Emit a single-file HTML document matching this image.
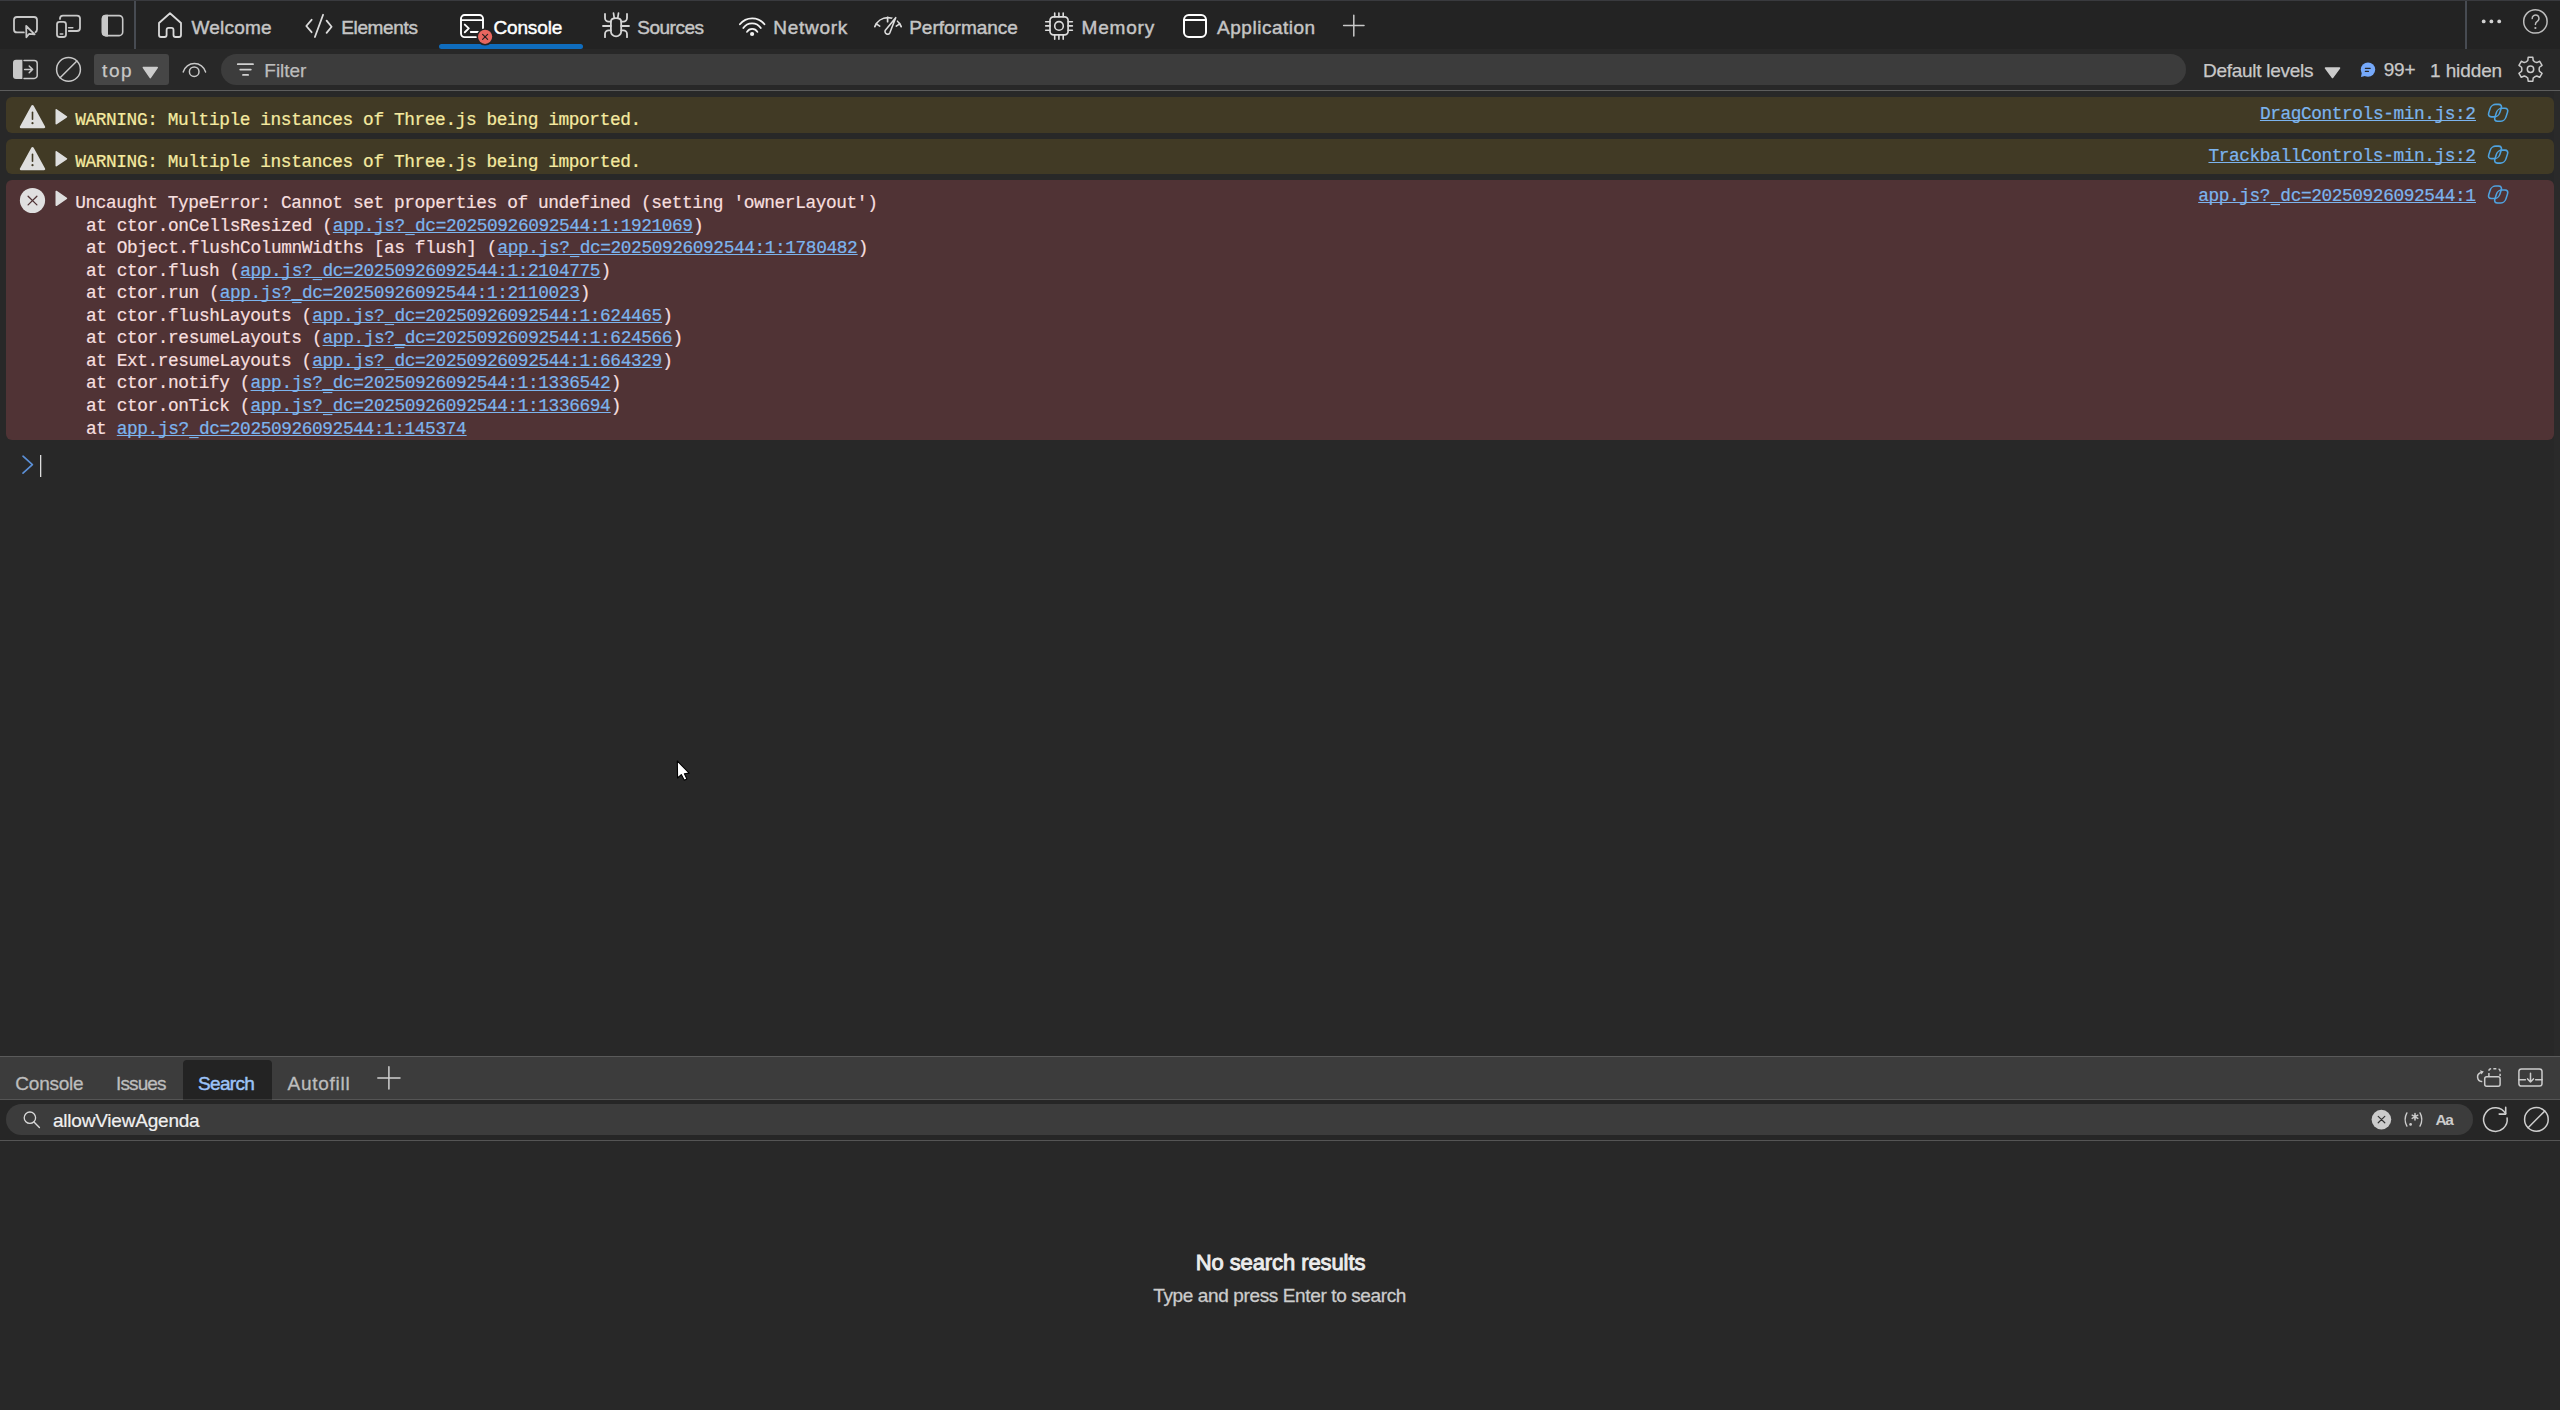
<!DOCTYPE html>
<html><head><meta charset="utf-8"><title>DevTools</title>
<style>html,body{margin:0;padding:0;background:#282828;overflow:hidden}svg{display:block}</style></head>
<body><svg width="2560" height="1410" viewBox="0 0 2560 1410">
<rect x="0" y="0" width="2560" height="1410" fill="#282828"/>
<rect x="0" y="0" width="2560" height="49" fill="#232323"/>
<rect x="0" y="0" width="2560" height="1" fill="#393a3e"/>
<rect x="134" y="1" width="2" height="48" fill="#474b52"/>
<rect x="2465" y="1" width="2" height="48" fill="#474b52"/>
<rect x="0" y="49" width="2560" height="41" fill="#282828"/>
<rect x="0" y="90" width="2560" height="1" fill="#5d5d5d"/>
<rect x="0" y="91" width="2560" height="965" fill="#282828"/>
<rect x="6" y="97" width="2548" height="36" rx="6" fill="#413a25"/>
<rect x="6" y="139" width="2548" height="35" rx="6" fill="#413a25"/>
<rect x="6" y="180" width="2548" height="260" rx="6" fill="#503335"/>
<rect x="2554" y="91" width="6" height="965" fill="#2a2a2a"/>
<rect x="0" y="1056" width="2560" height="1" fill="#5a5a5a"/>
<rect x="0" y="1057" width="2560" height="42" fill="#3c3c3c"/>
<rect x="0" y="1099" width="2560" height="1" fill="#555555"/>
<path d="M183 1099.5 V1064 a4 4 0 0 1 4 -4 H268 a4 4 0 0 1 4 4 V1099.5 Z" fill="#232323"/>
<rect x="0" y="1100" width="2560" height="40" fill="#262626"/>
<rect x="6" y="1104" width="2467" height="31" rx="15.5" fill="#3c3c3c"/>
<rect x="0" y="1140" width="2560" height="1" fill="#555555"/>
<rect x="0" y="1141" width="2560" height="269" fill="#282828"/>
<rect x="94" y="54" width="75" height="31" rx="3" fill="#464646"/>
<rect x="221" y="54" width="1965" height="31" rx="15.5" fill="#3c3c3c"/>
<rect x="439" y="44" width="144" height="5" rx="2.5" fill="#0f6cbd"/>
<text x="191.40" y="34.00" font-family="Liberation Sans" font-size="19" font-weight="normal" fill="#c5c5c5" textLength="80.30" lengthAdjust="spacing" style="white-space:pre"  stroke="#c5c5c5" stroke-width="0.45">Welcome</text>
<text x="341.20" y="34.00" font-family="Liberation Sans" font-size="19" font-weight="normal" fill="#c5c5c5" textLength="76.70" lengthAdjust="spacing" style="white-space:pre"  stroke="#c5c5c5" stroke-width="0.45">Elements</text>
<text x="493.40" y="34.00" font-family="Liberation Sans" font-size="19" font-weight="normal" fill="#ffffff" textLength="68.90" lengthAdjust="spacing" style="white-space:pre"  stroke="#ffffff" stroke-width="0.45">Console</text>
<text x="637.20" y="34.00" font-family="Liberation Sans" font-size="19" font-weight="normal" fill="#c5c5c5" textLength="66.90" lengthAdjust="spacing" style="white-space:pre"  stroke="#c5c5c5" stroke-width="0.45">Sources</text>
<text x="773.20" y="34.00" font-family="Liberation Sans" font-size="19" font-weight="normal" fill="#c5c5c5" textLength="74.10" lengthAdjust="spacing" style="white-space:pre"  stroke="#c5c5c5" stroke-width="0.45">Network</text>
<text x="909.20" y="34.00" font-family="Liberation Sans" font-size="19" font-weight="normal" fill="#c5c5c5" textLength="108.70" lengthAdjust="spacing" style="white-space:pre"  stroke="#c5c5c5" stroke-width="0.45">Performance</text>
<text x="1081.50" y="34.00" font-family="Liberation Sans" font-size="19" font-weight="normal" fill="#c5c5c5" textLength="72.70" lengthAdjust="spacing" style="white-space:pre"  stroke="#c5c5c5" stroke-width="0.45">Memory</text>
<text x="1217.00" y="34.00" font-family="Liberation Sans" font-size="19" font-weight="normal" fill="#c5c5c5" textLength="98.20" lengthAdjust="spacing" style="white-space:pre"  stroke="#c5c5c5" stroke-width="0.45">Application</text>
<text x="102.10" y="76.90" font-family="Liberation Sans" font-size="19" font-weight="normal" fill="#c8c8c8" textLength="29.50" lengthAdjust="spacing" style="white-space:pre"  stroke="#c8c8c8" stroke-width="0.25">top</text>
<text x="264.30" y="76.90" font-family="Liberation Sans" font-size="19" font-weight="normal" fill="#bdbdbd" textLength="42.10" lengthAdjust="spacing" style="white-space:pre"  stroke="#bdbdbd" stroke-width="0.25">Filter</text>
<text x="2203.10" y="76.90" font-family="Liberation Sans" font-size="19" font-weight="normal" fill="#c8c8c8" textLength="110.30" lengthAdjust="spacing" style="white-space:pre"  stroke="#c8c8c8" stroke-width="0.25">Default levels</text>
<text x="2383.70" y="75.90" font-family="Liberation Sans" font-size="19" font-weight="normal" fill="#c8c8c8" textLength="31.90" lengthAdjust="spacing" style="white-space:pre"  stroke="#c8c8c8" stroke-width="0.25">99+</text>
<text x="2430.00" y="76.90" font-family="Liberation Sans" font-size="19" font-weight="normal" fill="#c8c8c8" textLength="72.20" lengthAdjust="spacing" style="white-space:pre"  stroke="#c8c8c8" stroke-width="0.25">1 hidden</text>
<text x="75.20" y="125.00" font-family="Liberation Mono" font-size="17.8" font-weight="normal" fill="#f5eaa0" textLength="565.95" lengthAdjust="spacing" style="white-space:pre"  stroke="#f5eaa0" stroke-width="0.22">WARNING: Multiple instances of Three.js being imported.</text>
<text x="75.20" y="167.00" font-family="Liberation Mono" font-size="17.8" font-weight="normal" fill="#f5eaa0" textLength="565.95" lengthAdjust="spacing" style="white-space:pre"  stroke="#f5eaa0" stroke-width="0.22">WARNING: Multiple instances of Three.js being imported.</text>
<text x="75.20" y="208.00" font-family="Liberation Mono" font-size="17.8" font-weight="normal" fill="#f6dfdf" textLength="802.62" lengthAdjust="spacing" style="white-space:pre"  stroke="#f6dfdf" stroke-width="0.22">Uncaught TypeError: Cannot set properties of undefined (setting &#x27;ownerLayout&#x27;)</text>
<text x="85.90" y="230.60" font-family="Liberation Mono" font-size="17.8" font-weight="normal" fill="#f6dfdf" textLength="246.96" lengthAdjust="spacing" style="white-space:pre"  stroke="#f6dfdf" stroke-width="0.22">at ctor.onCellsResized (</text>
<text x="332.86" y="230.60" font-family="Liberation Mono" font-size="17.8" font-weight="normal" fill="#7cb4ee" textLength="360.15" lengthAdjust="spacing" style="white-space:pre"  stroke="#7cb4ee" stroke-width="0.22">app.js?_dc=20250926092544:1:1921069</text>
<rect x="332.86" y="232" width="360.15" height="1" fill="#7cb4ee"/>
<rect x="405.29" y="234" width="9.4" height="1.1" fill="#7cb4ee"/>
<text x="693.01" y="230.60" font-family="Liberation Mono" font-size="17.8" font-weight="normal" fill="#f6dfdf" textLength="10.29" lengthAdjust="spacing" style="white-space:pre"  stroke="#f6dfdf" stroke-width="0.22">)</text>
<text x="85.90" y="253.15" font-family="Liberation Mono" font-size="17.8" font-weight="normal" fill="#f6dfdf" textLength="411.60" lengthAdjust="spacing" style="white-space:pre"  stroke="#f6dfdf" stroke-width="0.22">at Object.flushColumnWidths [as flush] (</text>
<text x="497.50" y="253.15" font-family="Liberation Mono" font-size="17.8" font-weight="normal" fill="#7cb4ee" textLength="360.15" lengthAdjust="spacing" style="white-space:pre"  stroke="#7cb4ee" stroke-width="0.22">app.js?_dc=20250926092544:1:1780482</text>
<rect x="497.50" y="254" width="360.15" height="1" fill="#7cb4ee"/>
<rect x="569.93" y="256" width="9.4" height="1.1" fill="#7cb4ee"/>
<text x="857.65" y="253.15" font-family="Liberation Mono" font-size="17.8" font-weight="normal" fill="#f6dfdf" textLength="10.29" lengthAdjust="spacing" style="white-space:pre"  stroke="#f6dfdf" stroke-width="0.22">)</text>
<text x="85.90" y="275.70" font-family="Liberation Mono" font-size="17.8" font-weight="normal" fill="#f6dfdf" textLength="154.35" lengthAdjust="spacing" style="white-space:pre"  stroke="#f6dfdf" stroke-width="0.22">at ctor.flush (</text>
<text x="240.25" y="275.70" font-family="Liberation Mono" font-size="17.8" font-weight="normal" fill="#7cb4ee" textLength="360.15" lengthAdjust="spacing" style="white-space:pre"  stroke="#7cb4ee" stroke-width="0.22">app.js?_dc=20250926092544:1:2104775</text>
<rect x="240.25" y="277" width="360.15" height="1" fill="#7cb4ee"/>
<rect x="312.68" y="279" width="9.4" height="1.1" fill="#7cb4ee"/>
<text x="600.40" y="275.70" font-family="Liberation Mono" font-size="17.8" font-weight="normal" fill="#f6dfdf" textLength="10.29" lengthAdjust="spacing" style="white-space:pre"  stroke="#f6dfdf" stroke-width="0.22">)</text>
<text x="85.90" y="298.25" font-family="Liberation Mono" font-size="17.8" font-weight="normal" fill="#f6dfdf" textLength="133.77" lengthAdjust="spacing" style="white-space:pre"  stroke="#f6dfdf" stroke-width="0.22">at ctor.run (</text>
<text x="219.67" y="298.25" font-family="Liberation Mono" font-size="17.8" font-weight="normal" fill="#7cb4ee" textLength="360.15" lengthAdjust="spacing" style="white-space:pre"  stroke="#7cb4ee" stroke-width="0.22">app.js?_dc=20250926092544:1:2110023</text>
<rect x="219.67" y="300" width="360.15" height="1" fill="#7cb4ee"/>
<rect x="292.10" y="302" width="9.4" height="1.1" fill="#7cb4ee"/>
<text x="579.82" y="298.25" font-family="Liberation Mono" font-size="17.8" font-weight="normal" fill="#f6dfdf" textLength="10.29" lengthAdjust="spacing" style="white-space:pre"  stroke="#f6dfdf" stroke-width="0.22">)</text>
<text x="85.90" y="320.80" font-family="Liberation Mono" font-size="17.8" font-weight="normal" fill="#f6dfdf" textLength="226.38" lengthAdjust="spacing" style="white-space:pre"  stroke="#f6dfdf" stroke-width="0.22">at ctor.flushLayouts (</text>
<text x="312.28" y="320.80" font-family="Liberation Mono" font-size="17.8" font-weight="normal" fill="#7cb4ee" textLength="349.86" lengthAdjust="spacing" style="white-space:pre"  stroke="#7cb4ee" stroke-width="0.22">app.js?_dc=20250926092544:1:624465</text>
<rect x="312.28" y="322" width="349.86" height="1" fill="#7cb4ee"/>
<rect x="384.71" y="324" width="9.4" height="1.1" fill="#7cb4ee"/>
<text x="662.14" y="320.80" font-family="Liberation Mono" font-size="17.8" font-weight="normal" fill="#f6dfdf" textLength="10.29" lengthAdjust="spacing" style="white-space:pre"  stroke="#f6dfdf" stroke-width="0.22">)</text>
<text x="85.90" y="343.35" font-family="Liberation Mono" font-size="17.8" font-weight="normal" fill="#f6dfdf" textLength="236.67" lengthAdjust="spacing" style="white-space:pre"  stroke="#f6dfdf" stroke-width="0.22">at ctor.resumeLayouts (</text>
<text x="322.57" y="343.35" font-family="Liberation Mono" font-size="17.8" font-weight="normal" fill="#7cb4ee" textLength="349.86" lengthAdjust="spacing" style="white-space:pre"  stroke="#7cb4ee" stroke-width="0.22">app.js?_dc=20250926092544:1:624566</text>
<rect x="322.57" y="345" width="349.86" height="1" fill="#7cb4ee"/>
<rect x="395.00" y="347" width="9.4" height="1.1" fill="#7cb4ee"/>
<text x="672.43" y="343.35" font-family="Liberation Mono" font-size="17.8" font-weight="normal" fill="#f6dfdf" textLength="10.29" lengthAdjust="spacing" style="white-space:pre"  stroke="#f6dfdf" stroke-width="0.22">)</text>
<text x="85.90" y="365.90" font-family="Liberation Mono" font-size="17.8" font-weight="normal" fill="#f6dfdf" textLength="226.38" lengthAdjust="spacing" style="white-space:pre"  stroke="#f6dfdf" stroke-width="0.22">at Ext.resumeLayouts (</text>
<text x="312.28" y="365.90" font-family="Liberation Mono" font-size="17.8" font-weight="normal" fill="#7cb4ee" textLength="349.86" lengthAdjust="spacing" style="white-space:pre"  stroke="#7cb4ee" stroke-width="0.22">app.js?_dc=20250926092544:1:664329</text>
<rect x="312.28" y="367" width="349.86" height="1" fill="#7cb4ee"/>
<rect x="384.71" y="369" width="9.4" height="1.1" fill="#7cb4ee"/>
<text x="662.14" y="365.90" font-family="Liberation Mono" font-size="17.8" font-weight="normal" fill="#f6dfdf" textLength="10.29" lengthAdjust="spacing" style="white-space:pre"  stroke="#f6dfdf" stroke-width="0.22">)</text>
<text x="85.90" y="388.45" font-family="Liberation Mono" font-size="17.8" font-weight="normal" fill="#f6dfdf" textLength="164.64" lengthAdjust="spacing" style="white-space:pre"  stroke="#f6dfdf" stroke-width="0.22">at ctor.notify (</text>
<text x="250.54" y="388.45" font-family="Liberation Mono" font-size="17.8" font-weight="normal" fill="#7cb4ee" textLength="360.15" lengthAdjust="spacing" style="white-space:pre"  stroke="#7cb4ee" stroke-width="0.22">app.js?_dc=20250926092544:1:1336542</text>
<rect x="250.54" y="390" width="360.15" height="1" fill="#7cb4ee"/>
<rect x="322.97" y="392" width="9.4" height="1.1" fill="#7cb4ee"/>
<text x="610.69" y="388.45" font-family="Liberation Mono" font-size="17.8" font-weight="normal" fill="#f6dfdf" textLength="10.29" lengthAdjust="spacing" style="white-space:pre"  stroke="#f6dfdf" stroke-width="0.22">)</text>
<text x="85.90" y="411.00" font-family="Liberation Mono" font-size="17.8" font-weight="normal" fill="#f6dfdf" textLength="164.64" lengthAdjust="spacing" style="white-space:pre"  stroke="#f6dfdf" stroke-width="0.22">at ctor.onTick (</text>
<text x="250.54" y="411.00" font-family="Liberation Mono" font-size="17.8" font-weight="normal" fill="#7cb4ee" textLength="360.15" lengthAdjust="spacing" style="white-space:pre"  stroke="#7cb4ee" stroke-width="0.22">app.js?_dc=20250926092544:1:1336694</text>
<rect x="250.54" y="412" width="360.15" height="1" fill="#7cb4ee"/>
<rect x="322.97" y="414" width="9.4" height="1.1" fill="#7cb4ee"/>
<text x="610.69" y="411.00" font-family="Liberation Mono" font-size="17.8" font-weight="normal" fill="#f6dfdf" textLength="10.29" lengthAdjust="spacing" style="white-space:pre"  stroke="#f6dfdf" stroke-width="0.22">)</text>
<text x="85.90" y="433.55" font-family="Liberation Mono" font-size="17.8" font-weight="normal" fill="#f6dfdf" textLength="30.87" lengthAdjust="spacing" style="white-space:pre"  stroke="#f6dfdf" stroke-width="0.22">at </text>
<text x="116.77" y="433.55" font-family="Liberation Mono" font-size="17.8" font-weight="normal" fill="#7cb4ee" textLength="349.86" lengthAdjust="spacing" style="white-space:pre"  stroke="#7cb4ee" stroke-width="0.22">app.js?_dc=20250926092544:1:145374</text>
<rect x="116.77" y="435" width="349.86" height="1" fill="#7cb4ee"/>
<rect x="189.20" y="437" width="9.4" height="1.1" fill="#7cb4ee"/>
<text x="2259.91" y="118.80" font-family="Liberation Mono" font-size="17.8" font-weight="normal" fill="#7cb4ee" textLength="216.09" lengthAdjust="spacing" style="white-space:pre"  stroke="#7cb4ee" stroke-width="0.22">DragControls-min.js:2</text>
<rect x="2259.91" y="120" width="216.09" height="1" fill="#7cb4ee"/>
<text x="2208.46" y="160.50" font-family="Liberation Mono" font-size="17.8" font-weight="normal" fill="#7cb4ee" textLength="267.54" lengthAdjust="spacing" style="white-space:pre"  stroke="#7cb4ee" stroke-width="0.22">TrackballControls-min.js:2</text>
<rect x="2208.46" y="162" width="267.54" height="1" fill="#7cb4ee"/>
<text x="2198.17" y="200.50" font-family="Liberation Mono" font-size="17.8" font-weight="normal" fill="#7cb4ee" textLength="277.83" lengthAdjust="spacing" style="white-space:pre"  stroke="#7cb4ee" stroke-width="0.22">app.js?_dc=20250926092544:1</text>
<rect x="2198.17" y="202" width="277.83" height="1" fill="#7cb4ee"/>
<rect x="2270.60" y="204" width="9.4" height="1.1" fill="#7cb4ee"/>
<text x="15.30" y="1089.90" font-family="Liberation Sans" font-size="19" font-weight="normal" fill="#bdbdbd" textLength="68.40" lengthAdjust="spacing" style="white-space:pre"  stroke="#bdbdbd" stroke-width="0.3">Console</text>
<text x="116.10" y="1089.90" font-family="Liberation Sans" font-size="19" font-weight="normal" fill="#bdbdbd" textLength="50.40" lengthAdjust="spacing" style="white-space:pre"  stroke="#bdbdbd" stroke-width="0.3">Issues</text>
<text x="198.10" y="1089.80" font-family="Liberation Sans" font-size="19" font-weight="normal" fill="#9cc3f8" textLength="56.70" lengthAdjust="spacing" style="white-space:pre"  stroke="#9cc3f8" stroke-width="0.45">Search</text>
<text x="287.50" y="1089.80" font-family="Liberation Sans" font-size="19" font-weight="normal" fill="#bdbdbd" textLength="62.30" lengthAdjust="spacing" style="white-space:pre"  stroke="#bdbdbd" stroke-width="0.3">Autofill</text>
<text x="52.90" y="1126.70" font-family="Liberation Sans" font-size="19" font-weight="normal" fill="#f0f0f0" textLength="146.80" lengthAdjust="spacing" style="white-space:pre"  stroke="#f0f0f0" stroke-width="0.2">allowViewAgenda</text>
<text x="1195.70" y="1269.90" font-family="Liberation Sans" font-size="22" font-weight="normal" fill="#ececec" textLength="169.70" lengthAdjust="spacing" style="white-space:pre"  stroke="#ececec" stroke-width="0.9">No search results</text>
<text x="1153.20" y="1301.70" font-family="Liberation Sans" font-size="19" font-weight="normal" fill="#cccccc" textLength="253.20" lengthAdjust="spacing" style="white-space:pre"  stroke="#cccccc" stroke-width="0.3">Type and press Enter to search</text>
<path d="M23.9 32.4 H17 a3 3 0 0 1 -3 -3 V20 a3 3 0 0 1 3 -3 H34 a3 3 0 0 1 3 3 V29.6 a3 3 0 0 1 -1.6 2.6" fill="none" stroke="#c8c8c8" stroke-width="1.8" stroke-linecap="round" stroke-linejoin="round" />
<path d="M26.2 26 L26.4 37.3 L29.2 33.8 L34.6 34.4 Z" fill="none" stroke="#c8c8c8" stroke-width="1.8" stroke-linecap="round" stroke-linejoin="round" />
<path d="M60 18.9 V18.6 a3 3 0 0 1 3 -3 H77 a3 3 0 0 1 3 3 V28 a3 3 0 0 1 -3 3 H68.8" fill="none" stroke="#c8c8c8" stroke-width="1.8" stroke-linecap="round" stroke-linejoin="round" />
<path d="M68.6 27.7 H72.8" fill="none" stroke="#c8c8c8" stroke-width="1.6" stroke-linecap="round" stroke-linejoin="round" />
<rect x="57" y="21.8" width="9" height="15.2" rx="2.5" fill="none" stroke="#c8c8c8" stroke-width="1.8"/>
<path d="M60.3 34 H62.7" fill="none" stroke="#c8c8c8" stroke-width="1.6" stroke-linecap="round" stroke-linejoin="round" />
<rect x="102.5" y="15.6" width="20.2" height="20" rx="3.6" fill="none" stroke="#c8c8c8" stroke-width="1.6"/>
<path d="M108 14.8 V36.4 H105.5 a3.8 3.8 0 0 1 -3.8 -3.8 V18.6 a3.8 3.8 0 0 1 3.8 -3.8 Z" fill="#c8c8c8" />
<path d="M159 23 L170 13.3 L181 23 V35 a2 2 0 0 1 -2 2 H175.5 a2 2 0 0 1 -2 -2 V29.9 a2 2 0 0 0 -2 -2 H168.6 a2 2 0 0 0 -2 2 V35 a2 2 0 0 1 -2 2 H161 a2 2 0 0 1 -2 -2 Z" fill="none" stroke="#dadada" stroke-width="1.8" stroke-linecap="round" stroke-linejoin="round" />
<path d="M311.6 19.8 L306.3 26 L311.6 32.2 M323.1 14.8 L314.9 37 M326.6 20.6 L331.6 26.7 L326.6 32.9" fill="none" stroke="#dcdcdc" stroke-width="1.8" stroke-linecap="round" stroke-linejoin="round" />
<rect x="461" y="15" width="22" height="22.1" rx="3.6" fill="none" stroke="#ffffff" stroke-width="1.9"/>
<path d="M461 20.1 H483" fill="none" stroke="#ffffff" stroke-width="1.9" stroke-linecap="round" stroke-linejoin="round" />
<path d="M464.8 24.6 L468.8 28.4 L464.8 32.3" fill="none" stroke="#ffffff" stroke-width="1.9" stroke-linecap="round" stroke-linejoin="round" />
<path d="M470.8 32 H479.6" fill="none" stroke="#ffffff" stroke-width="1.9" stroke-linecap="round" stroke-linejoin="round" />
<circle cx="485.1" cy="36.8" r="8.6" fill="#232323"/>
<circle cx="485.1" cy="36.8" r="7.1" fill="#e8665f"/>
<path d="M482.6 34.3 L487.6 39.3 M487.6 34.3 L482.6 39.3" fill="none" stroke="#2a2020" stroke-width="1.2" stroke-linecap="round" stroke-linejoin="round" />
<path d="M610.9 21.6 Q610.9 18.1 616 18.1 Q621.2 18.1 621.2 21.6 V31.2 A5.15 5.15 0 0 1 610.9 31.2 Z" fill="none" stroke="#d6d6d6" stroke-width="1.8" stroke-linecap="round" stroke-linejoin="round" />
<path d="M613.5 13.2 L614.2 17.6 M618.5 13.2 L617.8 17.6" fill="none" stroke="#d6d6d6" stroke-width="1.7" stroke-linecap="round" stroke-linejoin="round" />
<path d="M605 14 V18 a3.7 3.7 0 0 0 3.7 3.7 H610.9 M627 14 V18 a3.7 3.7 0 0 1 -3.7 3.7 H621.2" fill="none" stroke="#d6d6d6" stroke-width="1.8" stroke-linecap="round" stroke-linejoin="round" />
<path d="M603 26 H610.9 M621.2 26 H629" fill="none" stroke="#d6d6d6" stroke-width="1.8" stroke-linecap="round" stroke-linejoin="round" />
<path d="M605 37.2 V34 a3.7 3.7 0 0 1 3.7 -3.7 H610.9 M627 37.2 V34 a3.7 3.7 0 0 0 -3.7 -3.7 H621.2" fill="none" stroke="#d6d6d6" stroke-width="1.8" stroke-linecap="round" stroke-linejoin="round" />
<path d="M739.9 24.3 A15.6 15.6 0 0 1 764.5 24.3" fill="none" stroke="#f2f2f2" stroke-width="1.8" stroke-linecap="round" stroke-linejoin="round" />
<path d="M743.3 28.1 A10.4 10.4 0 0 1 760.8 28.1" fill="none" stroke="#f2f2f2" stroke-width="1.8" stroke-linecap="round" stroke-linejoin="round" />
<path d="M747 31.9 A6.0 6.0 0 0 1 757.4 31.9" fill="none" stroke="#f2f2f2" stroke-width="1.8" stroke-linecap="round" stroke-linejoin="round" />
<circle cx="752.1" cy="34" r="2.1" fill="#f2f2f2"/>
<path d="M874.8 26.6 A14.2 14.2 0 0 1 901.2 26.6" fill="none" stroke="#dcdcdc" stroke-width="1.7" stroke-linecap="round" stroke-linejoin="round" />
<path d="M895.7 17.7 L889.84 32.82 A2.6 2.6 0 0 1 885.36 30.18 Z" fill="none" stroke="#232323" stroke-width="4.5" stroke-linecap="round" stroke-linejoin="round" />
<path d="M895.7 17.7 L889.84 32.82 A2.6 2.6 0 0 1 885.36 30.18 Z" fill="none" stroke="#dcdcdc" stroke-width="1.6" stroke-linecap="round" stroke-linejoin="round" />
<path d="M876.4 23.9 L879.7 26.1 M887.6 17.3 V21.7 M899.6 23.9 L896.3 26.1" fill="none" stroke="#dcdcdc" stroke-width="1.7" stroke-linecap="round" stroke-linejoin="round" />
<rect x="1050" y="16.8" width="18.1" height="18.1" rx="3.6" fill="none" stroke="#dcdcdc" stroke-width="1.7"/>
<path d="M1054.7 13 V16.8 M1054.7 34.9 V39.2 M1058.9 13 V16.8 M1058.9 34.9 V39.2 M1063.2 13 V16.8 M1063.2 34.9 V39.2 M1045.7 21.7 H1050 M1068.1 21.7 H1072.4 M1045.7 25.9 H1050 M1068.1 25.9 H1072.4 M1045.7 30.2 H1050 M1068.1 30.2 H1072.4 " fill="none" stroke="#dcdcdc" stroke-width="1.6" stroke-linecap="round" stroke-linejoin="round" />
<circle cx="1059" cy="25.9" r="4.3" fill="none" stroke="#dcdcdc" stroke-width="1.6"/>
<rect x="1184" y="15" width="22" height="22" rx="4.8" fill="none" stroke="#ffffff" stroke-width="2"/>
<path d="M1184 20 H1206" fill="none" stroke="#ffffff" stroke-width="2" stroke-linecap="round" stroke-linejoin="round" />
<path d="M1343.6 25.6 H1364 M1353.8 15.2 V36" fill="none" stroke="#c8c8c8" stroke-width="1.5" stroke-linecap="round" stroke-linejoin="round" />
<circle cx="2483.7" cy="21.4" r="1.9" fill="#d2d2d2"/>
<circle cx="2491.4" cy="21.4" r="1.9" fill="#d2d2d2"/>
<circle cx="2499.2" cy="21.4" r="1.9" fill="#d2d2d2"/>
<circle cx="2535.4" cy="21.4" r="11.7" fill="none" stroke="#bdbdbd" stroke-width="1.5"/>
<path d="M2532.2 18.6 A3.4 3.4 0 1 1 2537.6 21.1 Q2535.4 22.4 2535.4 24.4" fill="none" stroke="#bdbdbd" stroke-width="1.5" stroke-linecap="round" stroke-linejoin="round" />
<circle cx="2535.4" cy="28.0" r="1.1" fill="#bdbdbd"/>
<path d="M24 60.5 H34.2 a3 3 0 0 1 3 3 V75.4 a3 3 0 0 1 -3 3 H24" fill="none" stroke="#c8c8c8" stroke-width="1.5" stroke-linecap="round" stroke-linejoin="round" />
<path d="M22.4 59.8 V79.1 H16 a3 3 0 0 1 -3 -3 V62.8 a3 3 0 0 1 3 -3 Z" fill="#c8c8c8" />
<path d="M24.6 69.4 H32.6 M29.2 66 L32.6 69.4 L29.2 72.8" fill="none" stroke="#c8c8c8" stroke-width="1.5" stroke-linecap="round" stroke-linejoin="round" />
<circle cx="68.5" cy="69.4" r="11.9" fill="none" stroke="#c8c8c8" stroke-width="1.5"/>
<path d="M76.9 61 L60.1 77.8" fill="none" stroke="#c8c8c8" stroke-width="1.5" stroke-linecap="round" stroke-linejoin="round" />
<path d="M143.4 67.5 H157.2 L150.3 77.6 Z" fill="#cccccc" stroke="#cccccc" stroke-width="1.6" stroke-linecap="round" stroke-linejoin="round" />
<path d="M183.2 72 A11.65 11.65 0 0 1 205.6 72" fill="none" stroke="#c8c8c8" stroke-width="1.4" stroke-linecap="round" stroke-linejoin="round" />
<circle cx="194.2" cy="71.7" r="4.8" fill="none" stroke="#c8c8c8" stroke-width="1.5"/>
<path d="M237.8 64.2 H253 M240.2 69.6 H250.8 M243 74.9 H248.1" fill="none" stroke="#d0d0d0" stroke-width="1.8" stroke-linecap="round" stroke-linejoin="round" />
<path d="M2325.5 68.1 H2339.5 L2332.5 77.5 Z" fill="#cccccc" stroke="#cccccc" stroke-width="1.6" stroke-linecap="round" stroke-linejoin="round" />
<circle cx="2368" cy="69.6" r="7.2" fill="#76a9fa"/>
<path d="M2361 77 L2362.2 70.5 L2367 75.5 Z" fill="#76a9fa" />
<path d="M2365.4 68.3 H2370.2 M2365.4 71.4 H2368.4" fill="none" stroke="#282828" stroke-width="1.3" stroke-linecap="round" stroke-linejoin="round" />
<path d="M2526.20 61.85 L2527.81 60.50 L2528.17 57.32 L2532.83 57.32 L2533.19 60.50 L2534.80 61.85 L2536.77 62.57 L2539.71 61.30 L2542.04 65.33 L2539.46 67.23 L2539.10 69.30 L2539.46 71.37 L2542.04 73.27 L2539.71 77.30 L2536.77 76.03 L2534.80 76.75 L2533.19 78.10 L2532.83 81.28 L2528.17 81.28 L2527.81 78.10 L2526.20 76.75 L2524.23 76.03 L2521.29 77.30 L2518.96 73.27 L2521.54 71.37 L2521.90 69.30 L2521.54 67.23 L2518.96 65.33 L2521.29 61.30 L2524.23 62.57 Z" fill="none" stroke="#cacaca" stroke-width="1.5" stroke-linecap="round" stroke-linejoin="round" />
<circle cx="2530.5" cy="69.3" r="3.2" fill="none" stroke="#cacaca" stroke-width="1.5"/>
<path d="M32.5 106.2 L44 127 H21 Z" fill="#dedede" stroke="#dedede" stroke-width="2.4" stroke-linecap="round" stroke-linejoin="round" />
<rect x="31.7" y="111.6" width="1.6" height="8.4" rx="0.8" fill="#413a25"/>
<circle cx="32.5" cy="123.2" r="1.1" fill="#413a25"/>
<path d="M56.3 109.8 V123.7 L66.4 116.8 Z" fill="#dedede" stroke="#dedede" stroke-width="1.6" stroke-linecap="round" stroke-linejoin="round" />
<path d="M32.5 148.2 L44 169 H21 Z" fill="#dedede" stroke="#dedede" stroke-width="2.4" stroke-linecap="round" stroke-linejoin="round" />
<rect x="31.7" y="153.6" width="1.6" height="8.4" rx="0.8" fill="#413a25"/>
<circle cx="32.5" cy="165.2" r="1.1" fill="#413a25"/>
<path d="M56.3 151.8 V165.7 L66.4 158.8 Z" fill="#dedede" stroke="#dedede" stroke-width="1.6" stroke-linecap="round" stroke-linejoin="round" />
<path d="M56.3 191.5 V205.3 L66.4 198.4 Z" fill="#dedede" stroke="#dedede" stroke-width="1.6" stroke-linecap="round" stroke-linejoin="round" />
<circle cx="32.5" cy="200.5" r="12.6" fill="#e0e0e0"/>
<path d="M28.1 196.2 L36.9 204.9 M36.9 196.2 L28.1 204.9" fill="none" stroke="#503335" stroke-width="1.3" stroke-linecap="round" stroke-linejoin="round" />
<g fill="none" stroke="#4fa3e0" stroke-width="1.6"><rect x="-5.5" y="-6.25" width="11" height="12.5" rx="4" transform="translate(2495 110.60000000000001) skewX(-18)"/><rect x="-5.5" y="-6.5" width="11" height="13" rx="4" transform="translate(2501.2 114.80000000000001) skewX(-18)"/></g>
<g fill="none" stroke="#4fa3e0" stroke-width="1.6"><rect x="-5.5" y="-6.25" width="11" height="12.5" rx="4" transform="translate(2495 152.39999999999998) skewX(-18)"/><rect x="-5.5" y="-6.5" width="11" height="13" rx="4" transform="translate(2501.2 156.6) skewX(-18)"/></g>
<g fill="none" stroke="#4fa3e0" stroke-width="1.6"><rect x="-5.5" y="-6.25" width="11" height="12.5" rx="4" transform="translate(2495 192.29999999999998) skewX(-18)"/><rect x="-5.5" y="-6.5" width="11" height="13" rx="4" transform="translate(2501.2 196.5) skewX(-18)"/></g>
<path d="M23 456.2 L32.4 464.7 L23 473.2" fill="none" stroke="#5b8fd6" stroke-width="1.7" stroke-linecap="round" stroke-linejoin="round" />
<rect x="40" y="455" width="1.3" height="22" fill="#dddddd"/>
<path d="M377.8 1077.9 H400 M388.9 1066.8 V1089" fill="none" stroke="#cfcfcf" stroke-width="1.5" stroke-linecap="round" stroke-linejoin="round" />
<rect x="2484.7" y="1076.8" width="15.4" height="9.4" rx="2" fill="none" stroke="#cccccc" stroke-width="1.5"/>
<path d="M2488.9 1076 V1071 a2.3 2.3 0 0 1 2.3 -2.3 H2497.8 a2.3 2.3 0 0 1 2.3 2.3 V1076" fill="none" stroke="#cccccc" stroke-width="1.5" stroke-dasharray="3 2.2"/>
<path d="M2481.6 1081.6 A4.6 4.6 0 0 1 2480.4 1072.8" fill="none" stroke="#cccccc" stroke-width="1.5" stroke-linecap="round" stroke-linejoin="round" />
<path d="M2480 1070.2 L2483.8 1071.6 L2481.4 1074.6 Z" fill="#cccccc" />
<rect x="2518.9" y="1068.9" width="23.1" height="17.1" rx="2.6" fill="none" stroke="#cccccc" stroke-width="1.5"/>
<path d="M2518.9 1079.8 H2525.4 M2535.6 1079.8 H2542" fill="none" stroke="#cccccc" stroke-width="1.5" stroke-linecap="round" stroke-linejoin="round" />
<path d="M2530.5 1073.2 V1082 M2527.6 1078.9 L2530.5 1082 L2533.4 1078.9" fill="none" stroke="#cccccc" stroke-width="1.5" stroke-linecap="round" stroke-linejoin="round" />
<circle cx="29.9" cy="1117.7" r="5.7" fill="none" stroke="#d8d8d8" stroke-width="1.3"/>
<path d="M34 1121.9 L39.4 1127.4" fill="none" stroke="#d8d8d8" stroke-width="1.4" stroke-linecap="round" stroke-linejoin="round" />
<circle cx="2381.4" cy="1119.6" r="9.8" fill="#cccccc"/>
<path d="M2378.2 1116.4 L2384.8 1122.8 M2384.8 1116.4 L2378.2 1122.8" fill="none" stroke="#333333" stroke-width="1.2" stroke-linecap="round" stroke-linejoin="round" />
<path d="M2406.9 1112.9 Q2403.3 1119.5 2406.9 1126.1 M2420 1112.9 Q2423.6 1119.5 2420 1126.1" fill="none" stroke="#cccccc" stroke-width="1.4" stroke-linecap="round" stroke-linejoin="round" />
<circle cx="2410.6" cy="1124.4" r="1.35" fill="#cccccc"/>
<path d="M2415 1113.6 V1120 M2412.2 1115.2 L2417.8 1118.4 M2417.8 1115.2 L2412.2 1118.4" fill="none" stroke="#cccccc" stroke-width="1.5" stroke-linecap="round" stroke-linejoin="round" />
<text x="2435.60" y="1124.90" font-family="Liberation Sans" font-size="15.4" font-weight="bold" fill="#cccccc" textLength="18.20" lengthAdjust="spacing" style="white-space:pre" >Aa</text>
<path d="M2507.1 1117.9 A11.8 11.8 0 1 1 2505.6 1113.6" fill="none" stroke="#cfcfcf" stroke-width="1.5" stroke-linecap="round" stroke-linejoin="round" />
<path d="M2499.2 1114.1 H2505.7 V1107.4" fill="none" stroke="#cfcfcf" stroke-width="1.6" stroke-linecap="round" stroke-linejoin="round" />
<circle cx="2536.4" cy="1119.4" r="11.8" fill="none" stroke="#cfcfcf" stroke-width="1.5"/>
<path d="M2544.7 1111.1 L2528.1 1127.7" fill="none" stroke="#cfcfcf" stroke-width="1.5" stroke-linecap="round" stroke-linejoin="round" />
<path d="M677.3 761 L677.6 778 L681.3 774.6 L684.3 780.2 L686.9 779 L684.4 773.8 L689.2 773.1 Z" fill="#ffffff" stroke="#000000" stroke-width="1.1" stroke-linejoin="round"/>
</svg></body></html>
